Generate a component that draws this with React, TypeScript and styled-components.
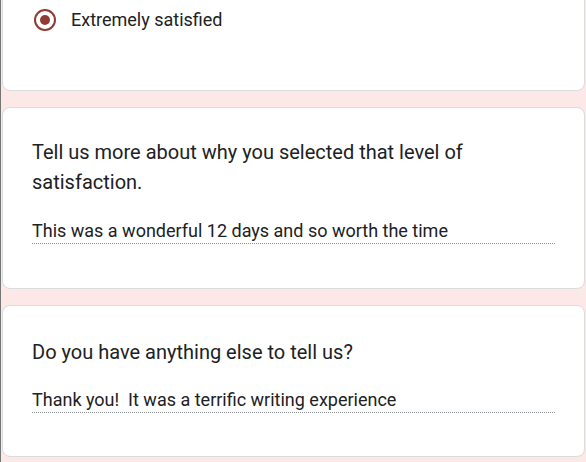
import React from "react";
import styled, { createGlobalStyle } from "styled-components";

const GlobalStyle = createGlobalStyle`
  html, body {
    margin: 0;
    padding: 0;
    background: #fce8e6;
  }
  body {
    font-family: Roboto, "Noto Sans", Arial, sans-serif;
    color: #202124;
  }
`;

const Page = styled.div`
  min-height: 480px;
  margin-top: -13px;
  padding: 0 0 0 1px;
  border-left: 1px solid #757575;
  display: flex;
  flex-direction: column;
  gap: 16px;
  box-sizing: border-box;
`;

const Card = styled.section<{ $pad: string }>`
  background: #fff;
  border: 1px solid #dadce0;
  border-radius: 8px;
  margin-right: 1px;
  padding: ${(p) => p.$pad};
`;

const RadioRow = styled.label`
  display: flex;
  align-items: center;
  gap: 15px;
  font-size: 18px;
  line-height: 24px;
`;

const Radio = styled.span`
  width: 22px;
  height: 22px;
  border: 2px solid #8f3c32;
  border-radius: 50%;
  display: flex;
  align-items: center;
  justify-content: center;
  box-sizing: border-box;

  &::after {
    content: "";
    width: 10px;
    height: 10px;
    border-radius: 50%;
    background: #8f3c32;
  }
`;

const Question = styled.div`
  font-size: 20px;
  line-height: 30px;
  max-width: 460px;
`;

const Answer = styled.div<{ $gap: number }>`
  margin-top: ${(p) => p.$gap}px;
  font-size: 18px;
  line-height: 24px;
  border-bottom: 1px dotted #8a8f94;
  margin-right: 29px;
  white-space: pre;
`;

const App: React.FC = () => {
  return (
    <React.Fragment>
      <GlobalStyle />
      <Page>
        <Card $pad="20px 30px 58px 31px">
          <RadioRow>
            <Radio />
            Extremely satisfied
          </RadioRow>
        </Card>
        <Card $pad="29px 0 44px 29px">
          <Question>Tell us more about why you selected that level of satisfaction.</Question>
          <Answer $gap={22}>This was a wonderful 12 days and so worth the time</Answer>
        </Card>
        <Card $pad="31px 0 43px 29px">
          <Question>Do you have anything else to tell us?</Question>
          <Answer $gap={21}>Thank you!  It was a terrific writing experience</Answer>
        </Card>
      </Page>
    </React.Fragment>
  );
};

export default App;
